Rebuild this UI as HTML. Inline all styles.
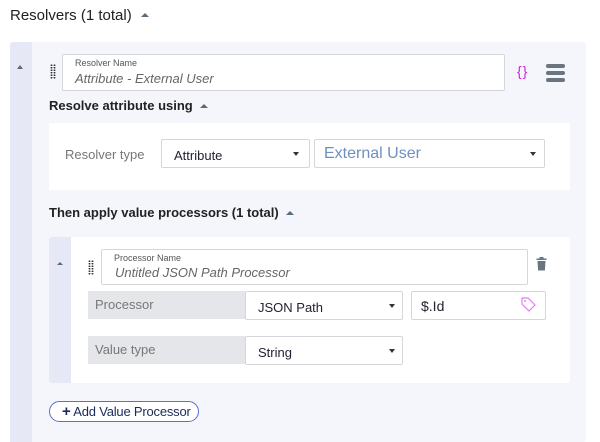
<!DOCTYPE html>
<html><head><style>
*{box-sizing:border-box;margin:0;padding:0}
body{width:600px;height:438px;overflow:hidden;background:#fff;font-family:"Liberation Sans",sans-serif;position:relative;color:#222}
.a{position:absolute}
.caret{width:0;height:0;border-left:4px solid transparent;border-right:4px solid transparent;border-bottom:4px solid #5a6b7b;display:inline-block}
.dcaret{position:absolute;width:0;height:0;border-left:3.5px solid transparent;border-right:3.5px solid transparent;border-top:4px solid #333}
.inp{position:absolute;background:#fff;border:1px solid #d4d6dc;border-radius:2px}
.lbl{position:absolute;font-size:9px;color:#555}
.val{position:absolute;font-size:13px;font-style:italic;color:#666}
.handle{position:absolute;width:6px;height:15px;background-image:radial-gradient(circle,#333 0.8px,transparent 1px);background-size:3px 2.5px}
.sel{position:absolute;background:#fff;border:1px solid #d4d6dc;border-radius:2px;font-size:13px;color:#223}
.gray{position:absolute;background:#e5e6ea;font-size:13px;color:#777}
</style></head><body>
<div class="a" style="left:10px;top:7px;font-size:15px;color:#222">Resolvers (1 total) <span class="caret" style="margin-left:5px;vertical-align:3px"></span></div>
<div class="a" style="left:10px;top:42px;width:576px;height:400px;background:#f5f6fb;border-radius:3px"></div>
<div class="a" style="left:10px;top:42px;width:22px;height:400px;background:#e6e8f5;border-radius:3px 0 0 0"></div>
<span class="caret a" style="left:17px;top:65px;border-width:0 3.5px 4px"></span>
<div class="handle" style="left:50px;top:64px"></div>
<div class="inp" style="left:62px;top:54px;width:443px;height:37px"></div>
<div class="lbl" style="left:75px;top:58px">Resolver Name</div>
<div class="val" style="left:75px;top:71px">Attribute - External User</div>
<div class="a" style="left:517px;top:63px;font-size:14px;color:#d020e0;letter-spacing:1px">{}</div>
<div class="a" style="left:546px;top:64px;width:19px;height:4px;background:#6b7580;border-radius:2px"></div>
<div class="a" style="left:546px;top:71px;width:19px;height:4px;background:#6b7580;border-radius:2px"></div>
<div class="a" style="left:546px;top:78px;width:19px;height:4px;background:#6b7580;border-radius:2px"></div>
<div class="a" style="left:49px;top:98px;font-size:13px;font-weight:bold">Resolve attribute using <span class="caret" style="margin-left:4px;vertical-align:2px"></span></div>
<div class="a" style="left:49px;top:123px;width:521px;height:67px;background:#fff"></div>
<div class="a" style="left:65px;top:147px;font-size:13px;color:#777">Resolver type</div>
<div class="sel" style="left:161px;top:139px;width:149px;height:29px;padding:8px 0 0 12px">Attribute</div>
<div class="dcaret" style="left:293px;top:152px"></div>
<div class="sel" style="left:314px;top:139px;width:231px;height:29px;padding:5px 0 0 9px;font-size:16px;color:#6f8fc0">External User</div>
<div class="dcaret" style="left:530px;top:152px"></div>
<div class="a" style="left:49px;top:205px;font-size:13px;font-weight:bold">Then apply value processors (1 total) <span class="caret" style="margin-left:4px;vertical-align:2px"></span></div>
<div class="a" style="left:49px;top:237px;width:521px;height:146px;background:#fff;border-radius:3px"></div>
<div class="a" style="left:49px;top:237px;width:22px;height:146px;background:#e6e8f5;border-radius:3px 0 0 3px"></div>
<span class="caret a" style="left:57px;top:262px;border-width:0 3px 3px"></span>
<div class="handle" style="left:88px;top:260px"></div>
<div class="inp" style="left:101px;top:249px;width:427px;height:36px"></div>
<div class="lbl" style="left:114px;top:253px">Processor Name</div>
<div class="val" style="left:115px;top:265px">Untitled JSON Path Processor</div>
<svg class="a" style="left:536px;top:257px" width="11" height="14" viewBox="0 0 11 14"><rect x="0.5" y="1.5" width="10" height="1.5" fill="#6b7580"/><rect x="3.5" y="0" width="4" height="2" fill="#6b7580"/><path d="M1.5 4h8l-.6 9.5h-6.8z" fill="#6b7580"/></svg>
<div class="gray" style="left:88px;top:291px;width:157px;height:28px;padding:6px 0 0 7px">Processor</div>
<div class="sel" style="left:245px;top:291px;width:158px;height:29px;padding:8px 0 0 12px">JSON Path</div>
<div class="dcaret" style="left:389px;top:304px"></div>
<div class="sel" style="left:411px;top:291px;width:135px;height:29px;padding:6px 0 0 9px;font-size:14px">$.Id</div>
<svg class="a" style="left:520px;top:296px" width="17" height="17" viewBox="0 0 17 17"><path d="M2 2h6l7 7-6 6-7-7z" fill="none" stroke="#e080f0" stroke-width="1.2"/><circle cx="5" cy="5" r="1" fill="#e080f0"/></svg>
<div class="gray" style="left:88px;top:336px;width:157px;height:28px;padding:6px 0 0 7px">Value type</div>
<div class="sel" style="left:245px;top:336px;width:158px;height:29px;padding:8px 0 0 12px">String</div>
<div class="dcaret" style="left:389px;top:349px"></div>
<div class="a" style="left:49px;top:401px;width:150px;height:21px;border:1px solid #5a6fd0;border-radius:11px;background:#fff;font-size:13px;color:#1a2a5a;padding:2px 0 0 12px;letter-spacing:-0.2px"><b style="font-size:15px;line-height:13px">+</b> Add Value Processor</div>
</body></html>
